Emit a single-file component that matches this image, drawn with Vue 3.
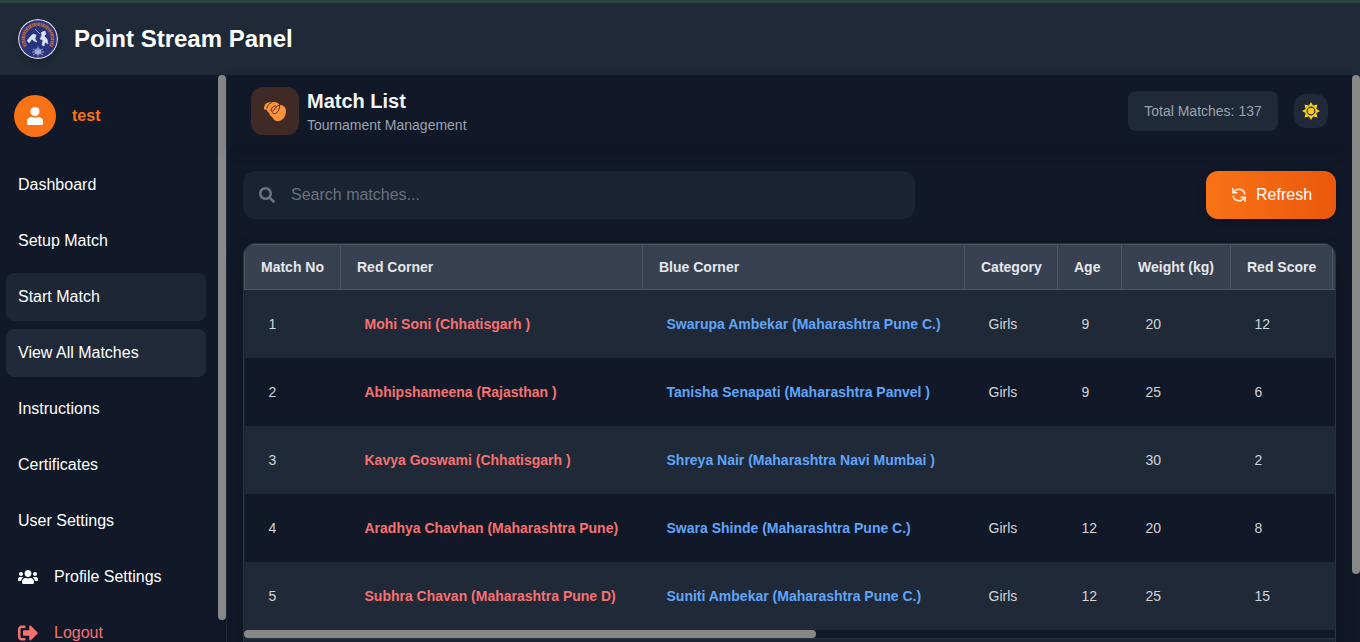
<script setup>
const before = ['Dashboard', 'Setup Match', 'Start Match', 'View All Matches', 'Instructions', 'Certificates', 'User Settings']
const heads = ['Match No', 'Red Corner', 'Blue Corner', 'Category', 'Age', 'Weight (kg)', 'Red Score', '']
const rows = [
  ['1', 'Mohi Soni (Chhatisgarh )', 'Swarupa Ambekar (Maharashtra Pune C.)', 'Girls', '9', '20', '12'],
  ['2', 'Abhipshameena (Rajasthan )', 'Tanisha Senapati (Maharashtra Panvel )', 'Girls', '9', '25', '6'],
  ['3', 'Kavya Goswami (Chhatisgarh )', 'Shreya Nair (Maharashtra Navi Mumbai )', '', '', '30', '2'],
  ['4', 'Aradhya Chavhan (Maharashtra Pune)', 'Swara Shinde (Maharashtra Pune C.)', 'Girls', '12', '20', '8'],
  ['5', 'Subhra Chavan (Maharashtra Pune D)', 'Suniti Ambekar (Maharashtra Pune C.)', 'Girls', '12', '25', '15'],
]
</script>

<template>
  <div class="app">
    <header class="top">
      <svg class="logo" viewBox="0 0 40 40">
        <circle cx="20" cy="20" r="19.4" fill="#2d357c" stroke="#d5d9e5" stroke-width="1.2" />
        <path d="M7.500 27.500A14.600 14.600 0 1 1 32.500 27.500" fill="none" stroke="#b6653f" stroke-width="3.600" stroke-dasharray="2 .6 1.300 .5" />
        <circle cx="20" cy="20" r="12.300" fill="#29347f" />
        <path d="M9 22l3-4 3-3 3 1-1 4 2 3-3-1-2-2-3 4M17 10l5 5M24 13l3-1 1 3-2 2 3 3 1 5-3-2-1 4-2-1 1-5-3-1 2-4-1-2z" fill="#dce4f5" stroke="#dce4f5" stroke-width=".6" />
        <circle cx="20" cy="32.500" r="3.200" fill="#8290c4" />
        <path d="M15 30l10 6M15 36l10-6M20 27.500v10M14 33h12" stroke="#b5c0e2" stroke-width=".8" />
      </svg>
      <h1>Point Stream Panel</h1>
    </header>
    <div class="body">
      <aside class="side">
        <div class="menu">
          <div class="user">
            <span class="avatar">
              <svg width="16" height="18" viewBox="0 0 16 18"><circle cx="8" cy="4.500" r="4.500" fill="#fff" /><path d="M0 16.500v-2C0 11.700 2.200 10 5 10c2 .8 4 .8 6 0 2.800 0 5 1.700 5 4.500v2c0 .9-.6 1.500-1.500 1.500h-13C.6 18 0 17.400 0 16.500z" fill="#fff" /></svg>
            </span>
            <b>test</b>
          </div>
          <nav>
            <a v-for="(n, i) in before" :key="n" :class="{ on: i === 2 || i === 3, hov: i === 2 }">{{ n }}</a>
            <a class="ico">
              <svg width="20" height="16" viewBox="0 0 640 512"><path fill="#fff" d="M96 224c35.300 0 64-28.700 64-64s-28.700-64-64-64-64 28.700-64 64 28.700 64 64 64zm448 0c35.300 0 64-28.700 64-64s-28.700-64-64-64-64 28.700-64 64 28.700 64 64 64zm32 32h-64c-17.600 0-33.500 7.100-45.100 18.600 40.300 22.100 68.900 62 75.100 109.400h66c17.700 0 32-14.300 32-32v-32c0-35.300-28.700-64-64-64zm-256 0c61.900 0 112-50.100 112-112S381.900 32 320 32 208 82.100 208 144s50.100 112 112 112zm76.800 32h-8.300c-20.800 10-43.900 16-68.500 16s-47.600-6-68.500-16h-8.300C179.600 288 128 339.600 128 403.200V432c0 26.500 21.500 48 48 48h288c26.500 0 48-21.500 48-48v-28.800c0-63.600-51.600-115.200-115.200-115.200zm-223.700-13.400C161.500 263.100 145.600 256 128 256H64c-35.300 0-64 28.700-64 64v32c0 17.700 14.300 32 32 32h65.900c6.300-47.400 34.900-87.300 75.200-109.400z" /></svg>
              Profile Settings
            </a>
            <a class="ico out">
              <svg width="20" height="20" viewBox="0 0 512 512"><path fill="#f87171" d="M497 273L329 441c-15 15-41 4.500-41-17v-96H152c-13.300 0-24-10.700-24-24v-96c0-13.300 10.700-24 24-24h136V88c0-21.400 25.900-32 41-17l168 168c9.300 9.400 9.300 24.600 0 34zM192 436v-40c0-6.600-5.400-12-12-12H96c-17.700 0-32-14.300-32-32V160c0-17.700 14.300-32 32-32h84c6.600 0 12-5.400 12-12V76c0-6.600-5.400-12-12-12H96c-53 0-96 43-96 96v192c0 53 43 96 96 96h84c6.600 0 12-5.400 12-12z" /></svg>
              Logout
            </a>
          </nav>
        </div>
        <div class="track"><div class="thumb side-thumb"></div></div>
      </aside>
      <main>
        <div class="bar">
          <span class="badge">
            <svg width="24" height="24" viewBox="0 0 24 24">
              <path fill="#fb923c" d="M1.100 10.500C.6 7 2.200 4.200 5 3.400c1.400-.4 2.400-.3 3.200.2C10.500 2.300 15 2.600 16.700 6c3.300-.4 6.200 2.200 6.300 5.900.1 4.800-2.900 9.700-7.400 10.200-3 .3-5.100-1.500-6.400-4.200-1.700-.6-2.500-2-2.800-3.700-1.400-.7-2.400-1.900-2.800-3.600-.7.200-1.300.3-1.500-.1z" />
              <path fill="none" stroke="#402a25" stroke-width=".9" stroke-linecap="round" d="M8.200 3.800C5.800 4.800 4.400 6.600 4 9M12.500 6.800C9.500 7.600 8 9.700 8 11.300c0 1.600 1.700 1.400 3-.3 1.500-2 2.500-4.200 5.700-5M16.700 6.200c.3 3.500-1.600 7.400-4.200 8.300-1.400.4-2.400.1-3.200-.8" />
            </svg>
          </span>
          <div class="title"><h2>Match List</h2><p>Tournament Management</p></div>
          <span class="total">Total Matches: 137</span>
          <span class="theme">
            <svg width="18" height="18" viewBox="0 0 18 18"><path fill="#facc15" fill-rule="evenodd" d="M9 0l2.100 3.600 4.300-1-1 4.300L18 9l-3.600 2.100 1 4.300-4.300-1L9 18l-2.100-3.600-4.300 1 1-4.300L0 9l3.600-2.100-1-4.300 4.300 1zM9 4.600a4.400 4.400 0 1 0 0 8.800 4.400 4.400 0 0 0 0-8.800z" /><circle cx="9" cy="9" r="3.300" fill="#facc15" /></svg>
          </span>
        </div>
        <div class="content">
          <div class="tools">
            <div class="search">
              <svg width="16" height="16" viewBox="0 0 512 512"><path fill="#6b7280" d="M505 442.700L405.300 343c-4.500-4.500-10.600-7-17-7H372c27.600-35.300 44-79.700 44-128C416 93.100 322.900 0 208 0S0 93.100 0 208s93.100 208 208 208c48.300 0 92.700-16.400 128-44v16.300c0 6.400 2.500 12.500 7 17l99.700 99.700c9.400 9.400 24.600 9.400 33.900 0l28.300-28.300c9.400-9.400 9.400-24.600.1-34zM208 336c-70.700 0-128-57.200-128-128 0-70.700 57.200-128 128-128 70.700 0 128 57.200 128 128 0 70.700-57.200 128-128 128z" /></svg>
              <span>Search matches...</span>
            </div>
            <div class="refresh">
              <svg width="14" height="14" viewBox="0 0 14 14" fill="none" stroke="#ffeadd" stroke-width="1.600"><path d="M12.900 6.400A6 6 0 0 0 1.600 4.600M.8 0v4.800h4.600M1.100 7.600A6 6 0 0 0 12.400 9.400M13.200 14V9.200H8.600" /></svg>
              Refresh
            </div>
          </div>
          <div class="table">
            <div class="grid head"><div v-for="(h, i) in heads" :key="i">{{ h }}</div></div>
            <div v-for="r in rows" :key="r[0]" class="grid row"><div v-for="(c, i) in r" :key="i"><span>{{ c }}</span></div></div>
            <div class="hscroll"><div class="thumb h-thumb"></div></div>
            <div class="foot"></div>
          </div>
        </div>
      </main>
      <div class="track"><div class="thumb page-thumb"></div></div>
    </div>
  </div>
</template>

<style>
html, body { margin: 0; background: #111827; overflow: hidden; }
</style>

<style scoped>
* { box-sizing: border-box; }
.app { width: 1360px; height: 642px; overflow: hidden; display: flex; flex-direction: column; background: #111827; color: #fff; font: 16px/24px "Liberation Sans", Arial, sans-serif; }
h1, h2, p { margin: 0; }
svg { display: block; flex: none; }
.top { height: 75px; flex: none; display: flex; align-items: center; gap: 16px; padding: 0 18px; background: #1f2937; border-top: 3px solid #2c4440; }
.logo { width: 40px; height: 40px; border-radius: 50%; box-shadow: 0 4px 6px rgba(0,0,0,.15); }
h1 { font-size: 24px; line-height: 32px; }
.body { flex: 1; min-height: 0; display: flex; }
.side { width: 227px; flex: none; display: flex; border-right: 1px solid #1f2937; overflow: hidden; }
.menu { flex: 1; }
.user { display: flex; align-items: center; gap: 16px; height: 82px; padding-left: 14px; color: #f97316; }
.avatar { width: 42px; height: 42px; border-radius: 50%; background: #f97316; display: flex; align-items: center; justify-content: center; }
nav { display: flex; flex-direction: column; gap: 8px; padding: 4px 12px 0 6px; }
nav a { height: 48px; flex: none; padding: 0 12px; display: flex; align-items: center; border-radius: 8px; }
.on { background: #1f2937; }
.hov { background: #1d2634; }
.ico { gap: 16px; }
.out { color: #f87171; }
.track { width: 8px; flex: none; }
.thumb { background: #888; border-radius: 4px; }
.side-thumb { height: 545px; }
.page-thumb { height: 499px; }
main { flex: 1; min-width: 0; display: flex; flex-direction: column; }
.bar { height: 72px; flex: none; display: flex; align-items: center; padding: 0 24px; box-shadow: 0 4px 12px rgba(0,0,0,.15); }
.badge { width: 48px; height: 48px; border-radius: 12px; background: #402a25; display: flex; align-items: center; justify-content: center; margin-right: 8px; }
.title { flex: 1; }
h2 { font-size: 20px; line-height: 28px; color: #f3f4f6; }
p { font-size: 14px; line-height: 20px; color: #9ca3af; }
.total { height: 40px; width: 150px; border-radius: 8px; background: #1f2937; color: #9ca3af; font-size: 14px; display: flex; align-items: center; justify-content: center; margin-right: 16px; }
.theme { width: 34px; height: 34px; border-radius: 12px; background: #1f2937; display: flex; align-items: center; justify-content: center; }
.content { padding: 24px 16px 0; }
.tools { display: flex; justify-content: space-between; }
.search { width: 672px; height: 48px; border-radius: 12px; background: #1a2331; color: #6b7280; display: flex; align-items: center; gap: 16px; padding-left: 16px; }
.refresh { width: 130px; height: 48px; border-radius: 12px; background: linear-gradient(90deg, #f97316, #ea580c); display: flex; align-items: center; padding-left: 26px; gap: 10px; box-shadow: 0 4px 10px rgba(0,0,0,.2); }
.table { margin-top: 24px; border: 1px solid #273242; border-radius: 12px; overflow: hidden; box-shadow: 0 8px 20px rgba(0,0,0,.15); font-size: 14px; background: #111827; }
.grid { display: grid; grid-template-columns: 96px 302px 322px 93px 64px 109px 102px 3px; }
.head { height: 46px; background: #374151; border-top: 1px solid #4b5563; border-bottom: 1px solid #4b5563; color: #e5e7eb; font-weight: 700; }
.head div { border-left: 1px solid #4b5563; padding: 10px 0 0 16px; white-space: nowrap; overflow: hidden; }
.row { height: 68px; background: #1f2937; color: #d1d5db; align-items: center; border-left: 1px solid #1a2534; }
.row:nth-child(odd) { background: #111827; }
.row div { padding-left: 23.500px; white-space: nowrap; }
.row div:nth-child(2) { color: #f87171; font-weight: 700; }
.row div:nth-child(3) { color: #60a5fa; font-weight: 700; }
.hscroll { height: 8px; background: #111827; }
.h-thumb { width: 572px; height: 8px; }
.foot { height: 48px; background: #1c2534; border-top: 1px solid #273242; }
</style>
